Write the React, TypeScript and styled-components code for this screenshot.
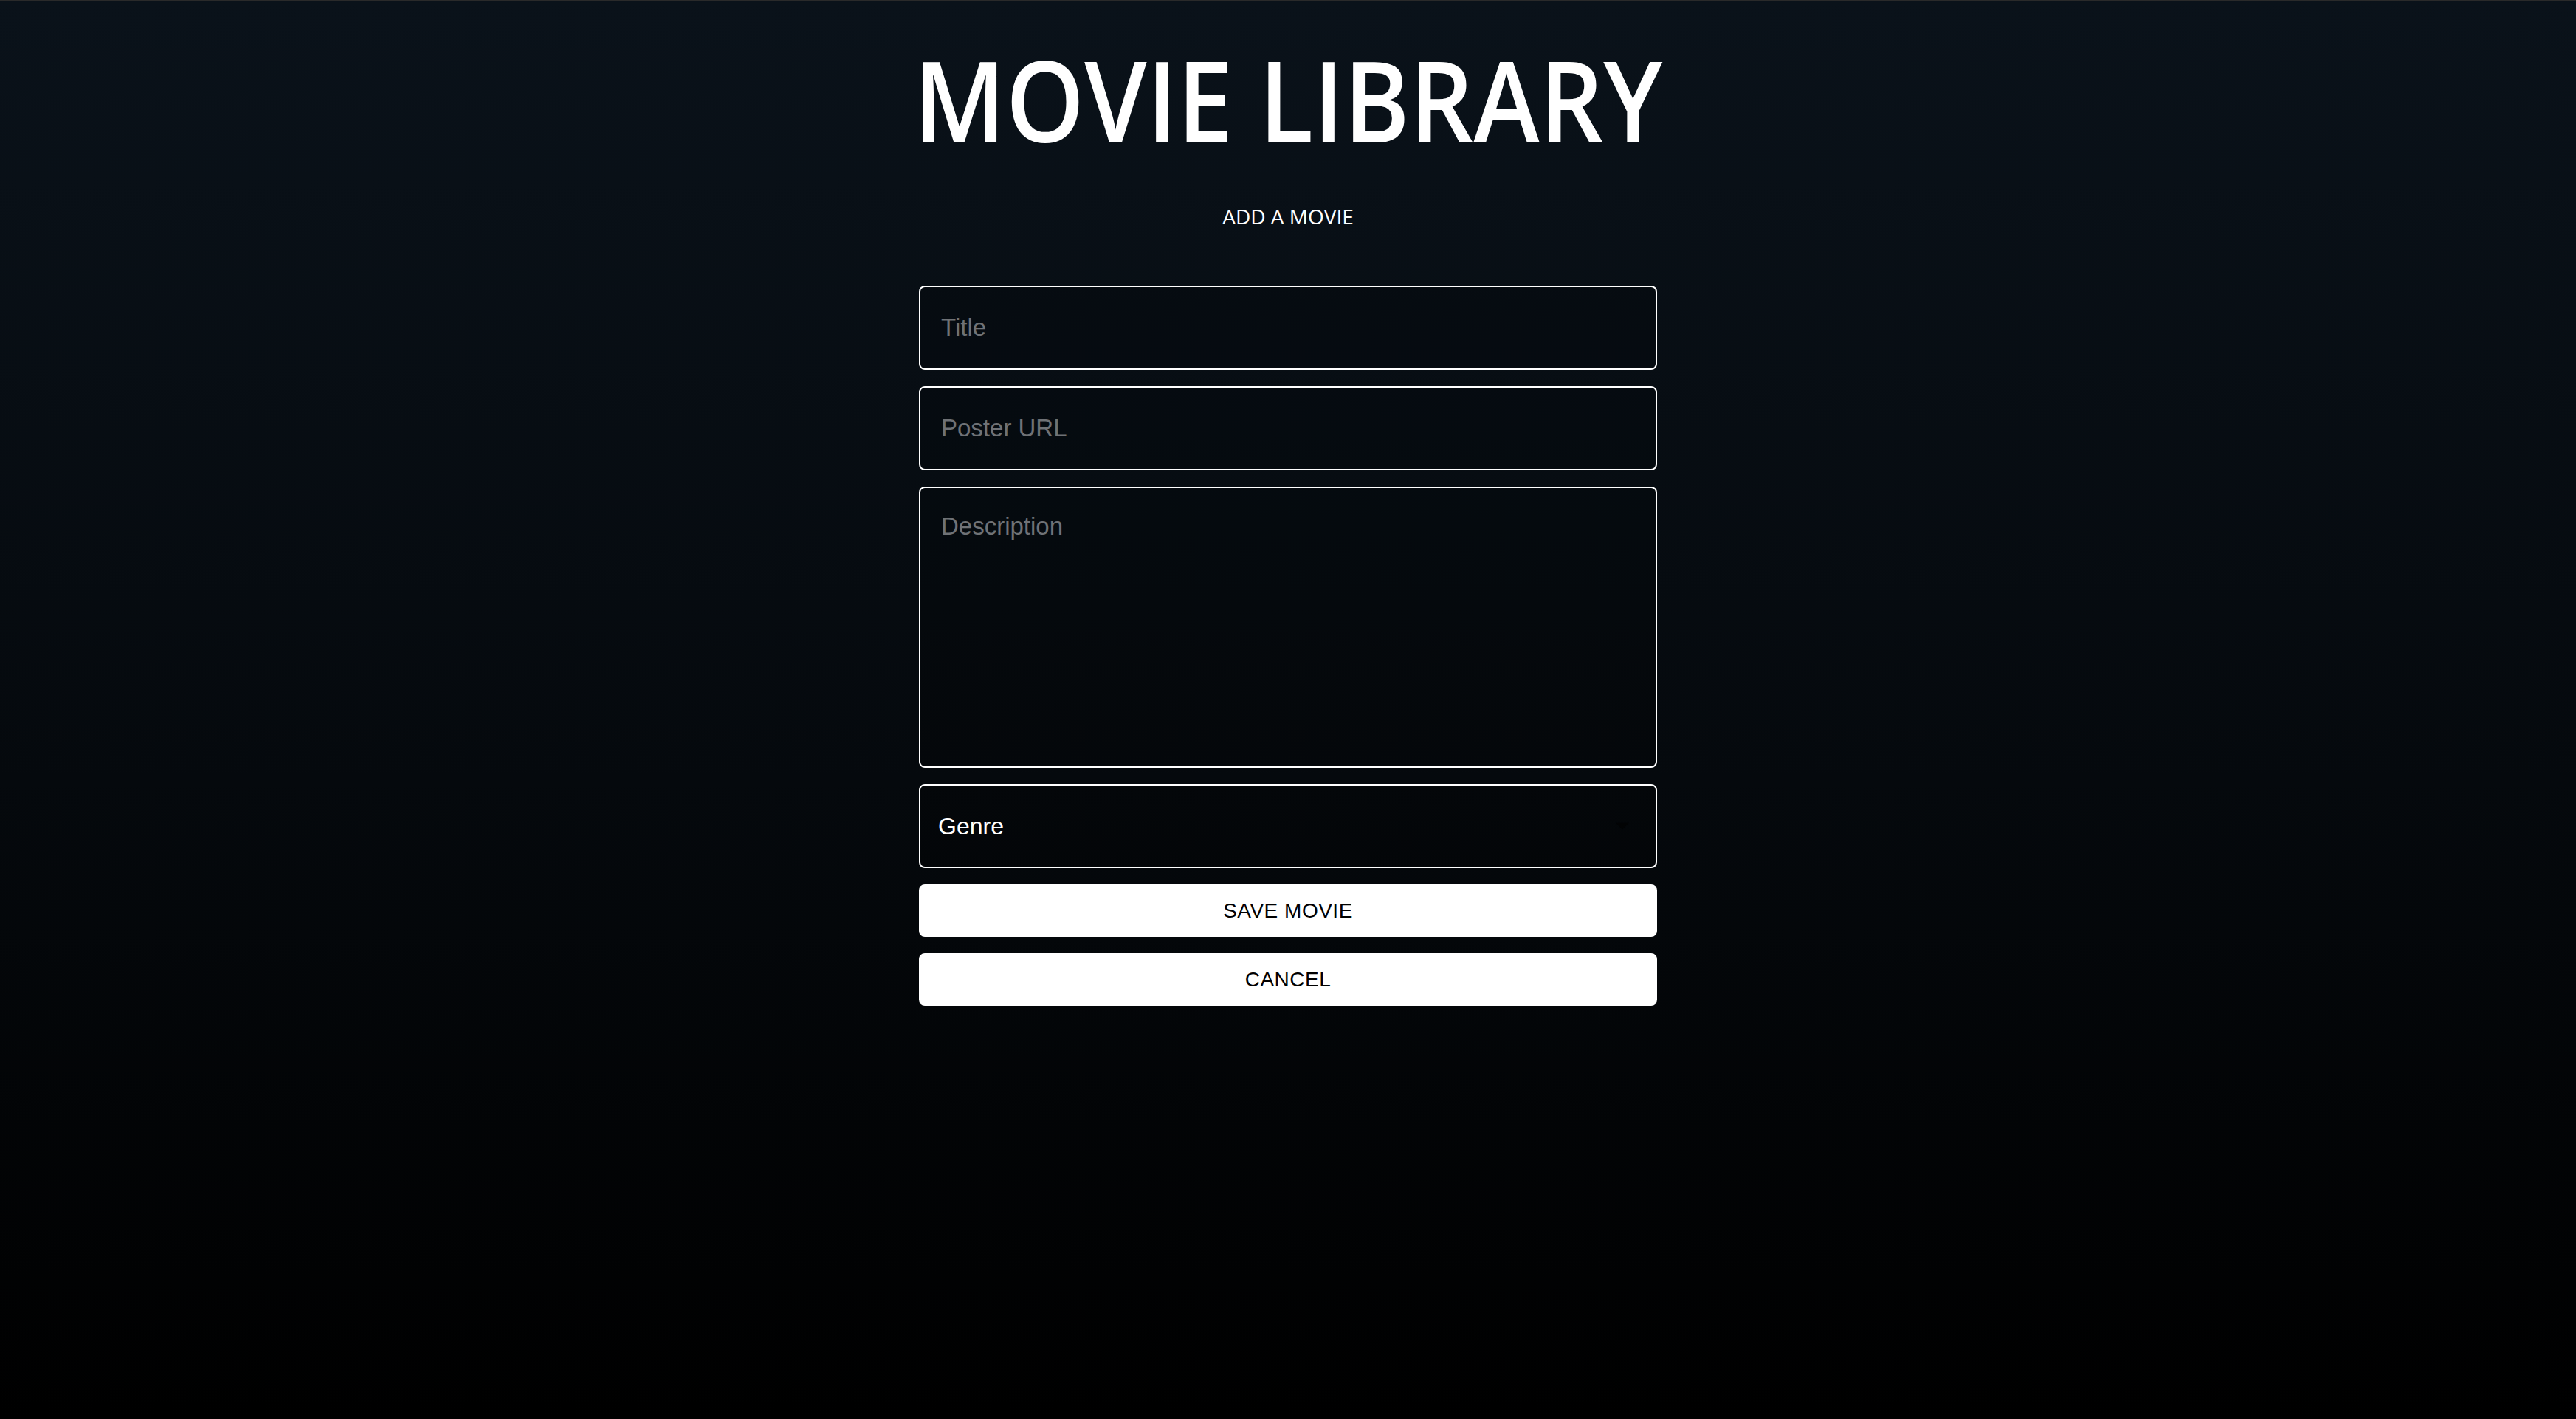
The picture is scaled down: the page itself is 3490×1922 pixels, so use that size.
import React from "react";
import styled, { createGlobalStyle } from "styled-components";

const GlobalStyle = createGlobalStyle`
  html, body { margin: 0; padding: 0; background: #000; }
  * { box-sizing: border-box; }
`;

const Page = styled.div`
  min-height: 1922px;
  border-top: 2px solid #2a2a2a;
  background: linear-gradient(to bottom, #0a121a 0%, #05090d 55%, #000000 100%);
  display: flex;
  flex-direction: column;
  align-items: center;
  font-family: "Liberation Sans", Arial, sans-serif;
`;

const Title = styled.h1`
  margin: 40px 0 0;
  font-family: "Open Sans", "Noto Sans", sans-serif;
  font-weight: 600;
  font-size: 153px;
  line-height: 1.2;
  color: #ffffff;
  letter-spacing: 0;
  transform: scaleX(0.885);
  transform-origin: center;
`;

const Subtitle = styled.h2`
  margin: 51px 0 0;
  font-family: "Open Sans", "Noto Sans", sans-serif;
  font-weight: 400;
  font-size: 28px;
  line-height: 1.2;
  color: #ffffff;
`;

const Form = styled.form`
  width: 1000px;
  margin-top: 77px;
  display: flex;
  flex-direction: column;
  gap: 22px;
`;

const fieldBase = `
  width: 100%;
  border: 2px solid #ffffff;
  border-radius: 8px;
  background: rgba(0, 0, 0, 0.15);
  color: #ffffff;
  font-family: "Liberation Sans", Arial, sans-serif;
  font-size: 33px;
  outline: none;
  &::placeholder { color: #6f7276; opacity: 1; }
`;

const TextInput = styled.input`
  ${fieldBase}
  height: 114px;
  padding: 0 28px;
`;

const TextArea = styled.textarea`
  ${fieldBase}
  height: 381px;
  padding: 33px 28px;
  resize: none;
`;

const SelectWrap = styled.div`
  position: relative;
`;

const Select = styled.select`
  ${fieldBase}
  appearance: none;
  height: 114px;
  padding: 0 24px;
  font-size: 32px;
  background: rgba(0, 0, 0, 0.2);
`;

const Arrow = styled.svg`
  position: absolute;
  right: 38px;
  top: 50%;
  transform: translateY(-50%);
  pointer-events: none;
`;

const Button = styled.button`
  height: 71px;
  width: 100%;
  border: none;
  border-radius: 8px;
  background: #ffffff;
  color: #000000;
  font-family: "Liberation Sans", Arial, sans-serif;
  font-size: 28px;
  letter-spacing: 0.5px;
  cursor: pointer;
`;

export default function App() {
  return (
    <>
      <GlobalStyle />
      <Page>
        <Title>MOVIE LIBRARY</Title>
        <Subtitle>ADD A MOVIE</Subtitle>
        <Form onSubmit={(e) => e.preventDefault()}>
          <TextInput type="text" placeholder="Title" />
          <TextInput type="text" placeholder="Poster URL" />
          <TextArea placeholder="Description" />
          <SelectWrap>
            <Select defaultValue="">
              <option value="">Genre</option>
              <option value="action">Action</option>
              <option value="comedy">Comedy</option>
              <option value="drama">Drama</option>
            </Select>
            <Arrow width="18" height="9" viewBox="0 0 18 9">
              <path d="M0 0 L18 0 L9 9 Z" fill="#020304" />
            </Arrow>
          </SelectWrap>
          <Button type="submit">SAVE MOVIE</Button>
          <Button type="button">CANCEL</Button>
        </Form>
      </Page>
    </>
  );
}
